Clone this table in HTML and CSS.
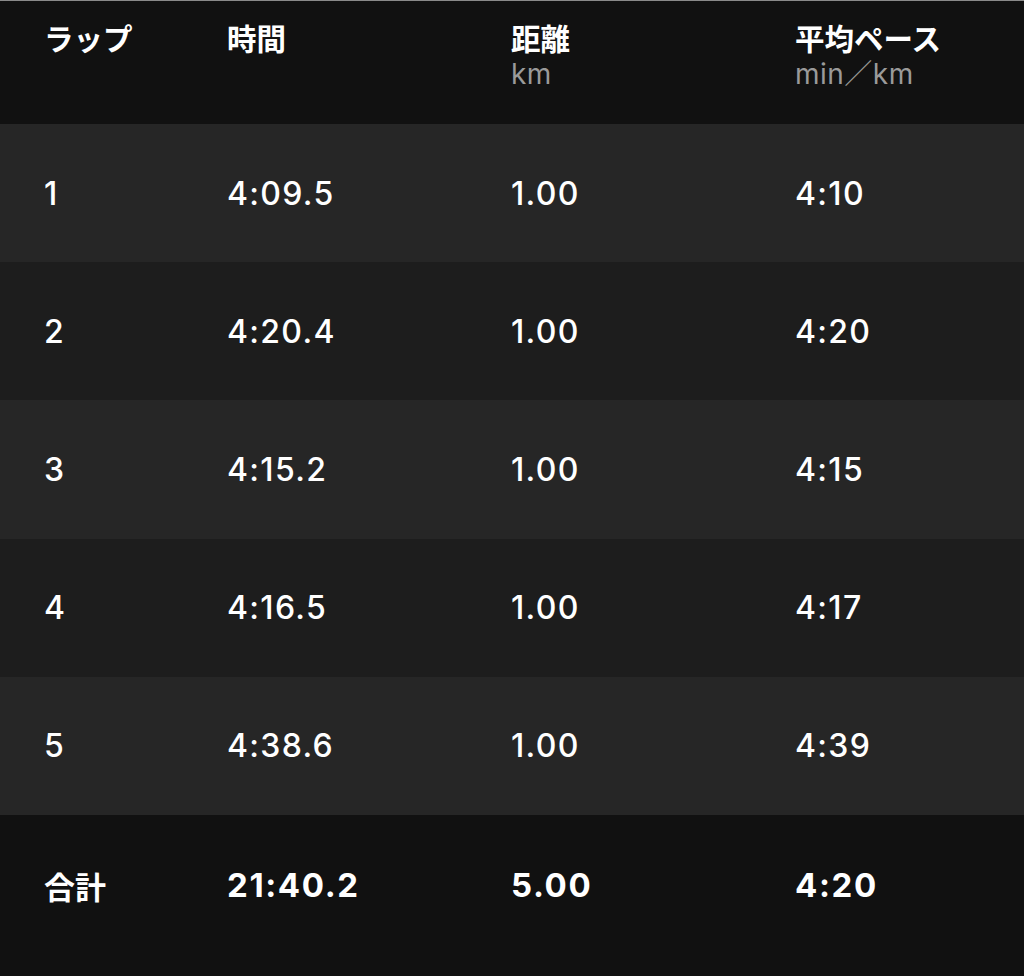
FILE: index.html
```html
<!DOCTYPE html>
<html lang="ja">
<head>
<meta charset="utf-8">
<link rel="stylesheet" href="styles.css">
</head>
<body>
<div class="table">
  <div class="row head">
    <div class="cell"><div class="title">ラップ</div></div>
    <div class="cell"><div class="title">時間</div></div>
    <div class="cell"><div class="title">距離</div><div class="unit">km</div></div>
    <div class="cell"><div class="title">平均ペース</div><div class="unit">min／km</div></div>
  </div>
  <div class="row odd"><div class="cell">1</div><div class="cell">4:09.5</div><div class="cell">1.00</div><div class="cell">4:10</div></div>
  <div class="row even"><div class="cell">2</div><div class="cell">4:20.4</div><div class="cell">1.00</div><div class="cell">4:20</div></div>
  <div class="row odd"><div class="cell">3</div><div class="cell">4:15.2</div><div class="cell">1.00</div><div class="cell">4:15</div></div>
  <div class="row even"><div class="cell">4</div><div class="cell">4:16.5</div><div class="cell">1.00</div><div class="cell">4:17</div></div>
  <div class="row odd"><div class="cell">5</div><div class="cell">4:38.6</div><div class="cell">1.00</div><div class="cell">4:39</div></div>
  <div class="row total"><div class="cell jp">合計</div><div class="cell">21:40.2</div><div class="cell">5.00</div><div class="cell">4:20</div></div>
</div>
</body>
</html>
```
FILE: styles.css
```css
html, body {
  margin: 0;
  padding: 0;
  background: #111111;
}
body {
  font-family: Inter, "Noto Sans CJK JP", sans-serif;
  color: #ffffff;
  width: 1024px;
  height: 976px;
  overflow: hidden;
}
.table {
  border-top: 1px solid #8a8a8a;
}
.row {
  display: grid;
  grid-template-columns: 183px 284px 284px 1fr;
  padding-left: 44px;
  align-items: center;
}
.cell {
  font-size: 32px;
  font-weight: 500;
  letter-spacing: 1.3px;
}
.head {
  height: 123px;
  background: #111111;
  align-items: start;
  padding-top: 16px;
  box-sizing: border-box;
}
.title {
  font-family: "Noto Sans CJK JP", sans-serif;
  font-weight: 700;
  font-size: 29.5px;
  line-height: 40px;
  letter-spacing: 0;
}
.unit {
  font-size: 28px;
  font-weight: 400;
  color: #9a9a9a;
  line-height: 34px;
  letter-spacing: 0.5px;
  font-family: Inter, "Noto Sans CJK JP", sans-serif;
}
.odd, .even {
  height: 138.2px;
}
.odd { background: #262626; }
.even { background: #1d1d1d; }
.total {
  height: 161px;
  background: #111111;
  padding-bottom: 20px;
  box-sizing: border-box;
}
.total .cell {
  font-weight: 700;
  font-size: 33px;
  letter-spacing: 1.6px;
}
.total .jp {
  font-family: "Noto Sans CJK JP", sans-serif;
  font-size: 31px;
  letter-spacing: 0;
}
```
